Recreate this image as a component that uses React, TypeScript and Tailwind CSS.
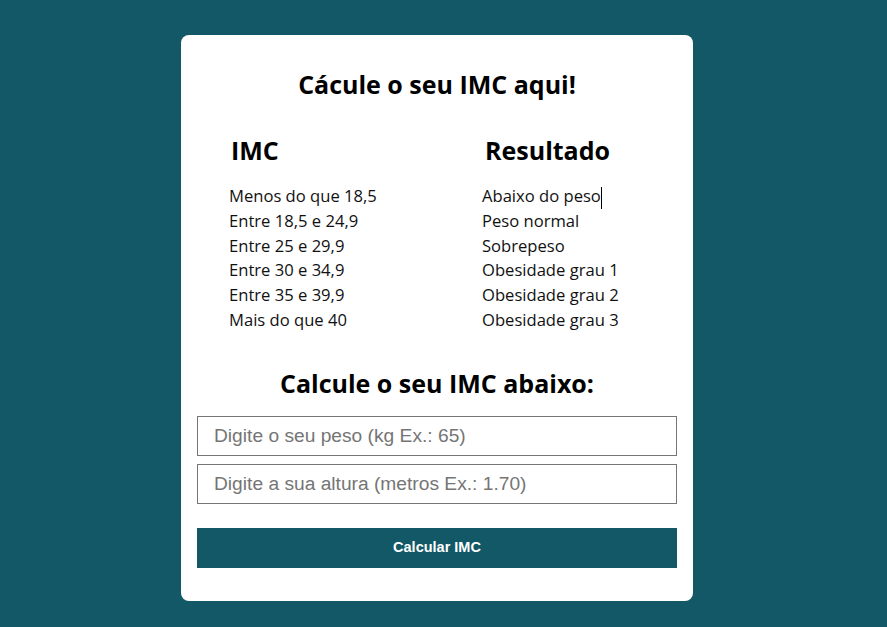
import React from 'react';

const ROWS: [string, string][] = [
  ['Menos do que 18,5', 'Abaixo do peso'],
  ['Entre 18,5 e 24,9', 'Peso normal'],
  ['Entre 25 e 29,9', 'Sobrepeso'],
  ['Entre 30 e 34,9', 'Obesidade grau 1'],
  ['Entre 35 e 39,9', 'Obesidade grau 2'],
  ['Mais do que 40', 'Obesidade grau 3'],
];

export default function App() {
  return (
    <div className="min-h-[627px] bg-[#125866] pt-[35px] pb-[26px] font-['Open_Sans',sans-serif] text-black">
      <div className="ml-[181px] w-[512px] rounded-lg bg-white px-4 pt-[33px] pb-[33px]">
        <h1 className="text-center text-[25px] font-bold leading-[33px]">Cácule o seu IMC aqui!</h1>

        {/* Tabela */}
        <div className="mt-[33px] pl-[32px]">
          <div className="grid grid-cols-[253px_1fr]">
            <h2 className="pl-[2px] text-[25px] font-bold leading-[33px]">IMC</h2>
            <h2 className="pl-[3px] text-[25px] font-bold leading-[33px]">Resultado</h2>
          </div>
          <div className="mt-[17px] grid grid-cols-[253px_1fr] text-[16.6px] leading-[24.8px] text-[#111]">
            {ROWS.map(([imc, res], i) => (
              <React.Fragment key={imc}>
                <div>{imc}</div>
                <div>
                  {res}
                  {i === 0 && <span className="inline-block h-[22px] w-px bg-black align-middle" />}
                </div>
              </React.Fragment>
            ))}
          </div>
        </div>

        <h2 className="mt-[34px] text-center text-[25px] font-bold leading-[33px]">Calcule o seu IMC abaixo:</h2>

        <form className="mt-4 flex flex-col font-['Liberation_Sans',Arial,sans-serif]">
          <input
            type="text"
            placeholder="Digite o seu peso (kg Ex.: 65)"
            className="h-10 w-full border border-[#767676] px-4 text-[19.2px] placeholder:text-[#757575] outline-none"
          />
          <input
            type="text"
            placeholder="Digite a sua altura (metros Ex.: 1.70)"
            className="mt-2 h-10 w-full border border-[#767676] px-4 text-[19.2px] placeholder:text-[#757575] outline-none"
          />
          <button
            type="button"
            className="mt-6 h-10 w-full bg-[#125866] text-[14.5px] font-bold text-white"
          >
            Calcular IMC
          </button>
        </form>
      </div>
    </div>
  );
}
